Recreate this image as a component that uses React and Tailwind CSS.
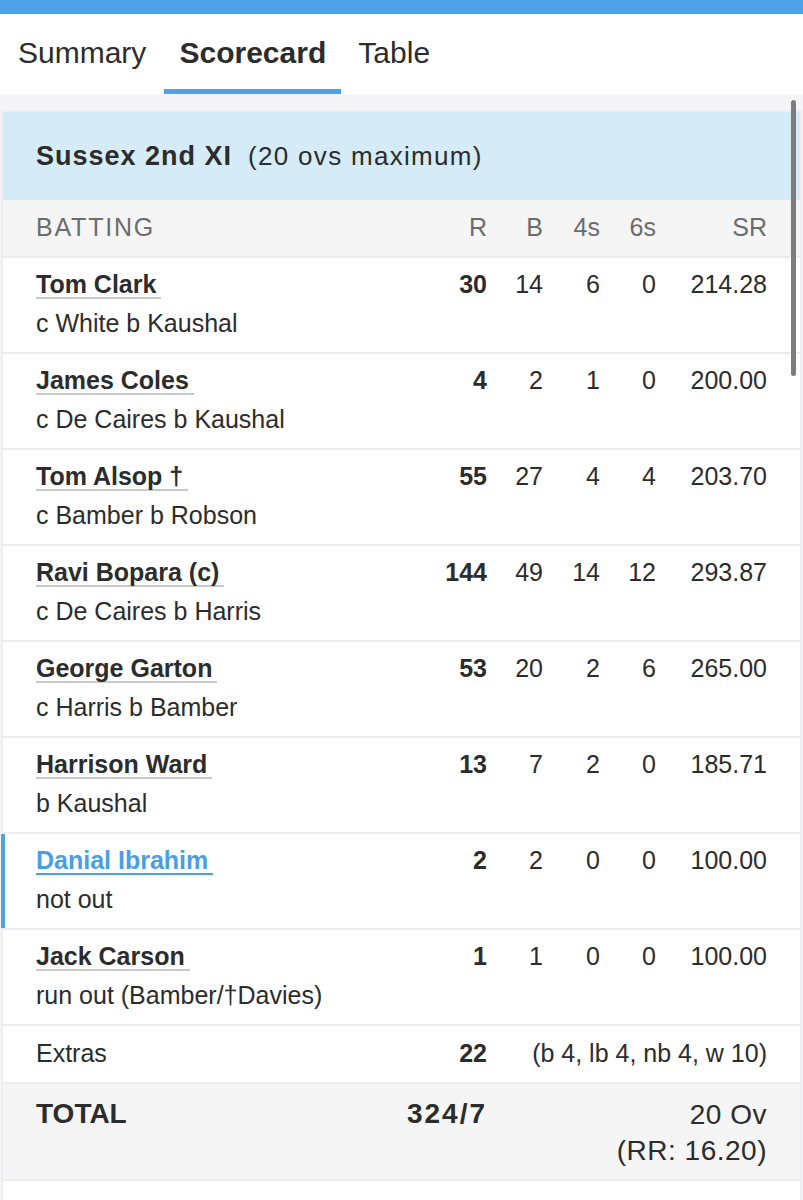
import React from 'react'

const batters = [
  { name: 'Tom Clark', how: 'c White b Kaushal', r: 30, b: 14, f: 6, s: 0, sr: '214.28' },
  { name: 'James Coles', how: 'c De Caires b Kaushal', r: 4, b: 2, f: 1, s: 0, sr: '200.00' },
  { name: 'Tom Alsop †', how: 'c Bamber b Robson', r: 55, b: 27, f: 4, s: 4, sr: '203.70' },
  { name: 'Ravi Bopara (c)', how: 'c De Caires b Harris', r: 144, b: 49, f: 14, s: 12, sr: '293.87' },
  { name: 'George Garton', how: 'c Harris b Bamber', r: 53, b: 20, f: 2, s: 6, sr: '265.00' },
  { name: 'Harrison Ward', how: 'b Kaushal', r: 13, b: 7, f: 2, s: 0, sr: '185.71' },
  { name: 'Danial Ibrahim', how: 'not out', r: 2, b: 2, f: 0, s: 0, sr: '100.00', active: true },
  { name: 'Jack Carson', how: 'run out (Bamber/†Davies)', r: 1, b: 1, f: 0, s: 0, sr: '100.00' },
]

function BatterRow({ p }) {
  return (
    <div className="relative flex border-b-2 border-[#ececee] pt-[11px] pb-[14px] pl-[33px] pr-[33px]">
      {p.active && <div className="absolute left-[-2px] top-0 bottom-0 w-[4px] bg-[#4ea3e8]" />}
      <div className="flex-1 min-w-0">
        <div className="h-[30px] leading-[30px]">
          <span className={`inline-block font-bold leading-[26px] pr-[5px] border-b-2 ${p.active ? 'text-[#4a9fe2] border-[#4a9fe2]' : 'text-[#2b2c2d] border-[#c9c9cb]'}`}>
            {p.name}
          </span>
        </div>
        <div className="mt-[9px] h-[30px] leading-[30px] text-[#2b2c2d]">{p.how}</div>
      </div>
      <div className="flex h-[30px] leading-[30px] text-[#2b2c2d]">
        <span className="w-[70px] text-right font-bold">{p.r}</span>
        <span className="w-[56px] text-right">{p.b}</span>
        <span className="w-[57px] text-right">{p.f}</span>
        <span className="w-[56px] text-right">{p.s}</span>
        <span className="w-[111px] text-right">{p.sr}</span>
      </div>
    </div>
  )
}

export default function App() {
  return (
    <div className="relative w-[803px] min-h-[1200px] bg-white text-[25px] text-[#2b2c2d] font-['Liberation_Sans',Arial,sans-serif]">
      <div className="h-[14px] bg-[#4ea3e8]" />

      {/* Tabs */}
      <div className="flex h-[80px] pl-[18px] text-[30px]">
        <div className="flex items-center pb-[4px] pr-[18px] text-[#2b2c2d]">Summary</div>
        <div className="flex flex-col w-[177px]">
          <div className="flex-1 flex items-center justify-center pt-[1px] font-bold text-[#2b2c2d]">Scorecard</div>
          <div className="h-[5px] bg-[#4ea3e8]" />
        </div>
        <div className="flex items-center pb-[4px] pl-[17px] text-[#2b2c2d]">Table</div>
      </div>

      <div className="bg-[#f5f5f7] pt-[16px]">
        <div className="mx-[1px] border-x-2 border-t-2 border-[#eeeef0] bg-white">
          {/* Team header */}
          <div className="flex items-center h-[88px] pl-[33px] bg-[#d5ebf8]">
            <span className="font-bold text-[27px] tracking-[1px]">Sussex 2nd XI</span>
            <span className="ml-[16px] text-[26px] tracking-[1.3px] font-medium">(20 ovs maximum)</span>
          </div>

          {/* Column header */}
          <div className="flex items-center h-[58px] pl-[33px] pr-[33px] bg-[#f5f5f5] text-[#6b6c6e] border-b-2 border-[#ececee]">
            <span className="flex-1 tracking-[1.8px]">BATTING</span>
            <span className="w-[70px] text-right">R</span>
            <span className="w-[56px] text-right">B</span>
            <span className="w-[57px] text-right">4s</span>
            <span className="w-[56px] text-right">6s</span>
            <span className="w-[111px] text-right">SR</span>
          </div>

          {batters.map(p => <BatterRow key={p.name} p={p} />)}

          {/* Extras */}
          <div className="flex items-center h-[58px] pl-[33px] pr-[33px] border-b-2 border-[#ececee]">
            <span className="flex-1">Extras</span>
            <span className="w-[70px] text-right font-bold">22</span>
            <span className="w-[280px] text-right">(b 4, lb 4, nb 4, w 10)</span>
          </div>

          {/* Total */}
          <div className="flex pt-[13px] pb-[10px] pl-[33px] pr-[33px] bg-[#f5f5f5] border-b-2 border-[#ececee] text-[28px]">
            <span className="flex-1 font-bold leading-[34px]">TOTAL</span>
            <span className="w-[120px] text-right font-bold leading-[34px] tracking-[2px]">324/7</span>
            <div className="w-[280px] text-right font-medium leading-[36px] tracking-[0.5px]">
              <div>20 Ov</div>
              <div>(RR: 16.20)</div>
            </div>
          </div>

          <div className="h-[40px] bg-white" />
        </div>
      </div>

      {/* overlay scrollbar */}
      <div className="absolute right-[7px] top-[100px] h-[276px] w-[5px] rounded-full bg-[#7c7c7e]" />
    </div>
  )
}
